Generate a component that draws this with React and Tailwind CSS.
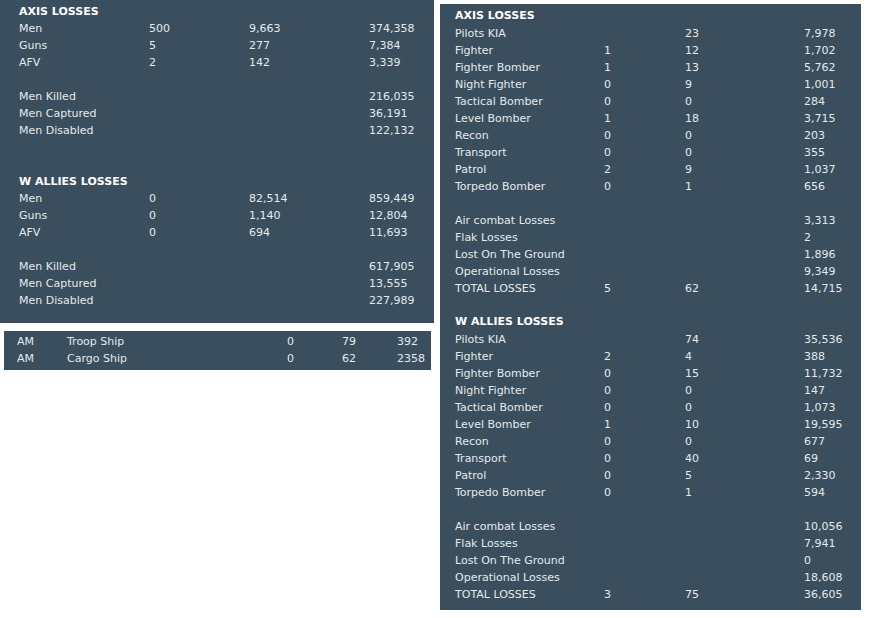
import React from 'react'

const leftAxis = [
  ['Men', '500', '9,663', '374,358'],
  ['Guns', '5', '277', '7,384'],
  ['AFV', '2', '142', '3,339'],
  null,
  ['Men Killed', '', '', '216,035'],
  ['Men Captured', '', '', '36,191'],
  ['Men Disabled', '', '', '122,132'],
]

const leftAllies = [
  ['Men', '0', '82,514', '859,449'],
  ['Guns', '0', '1,140', '12,804'],
  ['AFV', '0', '694', '11,693'],
  null,
  ['Men Killed', '', '', '617,905'],
  ['Men Captured', '', '', '13,555'],
  ['Men Disabled', '', '', '227,989'],
]

const airAxis = [
  ['Pilots KIA', '', '23', '7,978'],
  ['Fighter', '1', '12', '1,702'],
  ['Fighter Bomber', '1', '13', '5,762'],
  ['Night Fighter', '0', '9', '1,001'],
  ['Tactical Bomber', '0', '0', '284'],
  ['Level Bomber', '1', '18', '3,715'],
  ['Recon', '0', '0', '203'],
  ['Transport', '0', '0', '355'],
  ['Patrol', '2', '9', '1,037'],
  ['Torpedo Bomber', '0', '1', '656'],
  null,
  ['Air combat Losses', '', '', '3,313'],
  ['Flak Losses', '', '', '2'],
  ['Lost On The Ground', '', '', '1,896'],
  ['Operational Losses', '', '', '9,349'],
  ['TOTAL LOSSES', '5', '62', '14,715'],
]

const airAllies = [
  ['Pilots KIA', '', '74', '35,536'],
  ['Fighter', '2', '4', '388'],
  ['Fighter Bomber', '0', '15', '11,732'],
  ['Night Fighter', '0', '0', '147'],
  ['Tactical Bomber', '0', '0', '1,073'],
  ['Level Bomber', '1', '10', '19,595'],
  ['Recon', '0', '0', '677'],
  ['Transport', '0', '40', '69'],
  ['Patrol', '0', '5', '2,330'],
  ['Torpedo Bomber', '0', '1', '594'],
  null,
  ['Air combat Losses', '', '', '10,056'],
  ['Flak Losses', '', '', '7,941'],
  ['Lost On The Ground', '', '', '0'],
  ['Operational Losses', '', '', '18,608'],
  ['TOTAL LOSSES', '3', '75', '36,605'],
]

function Rows({ rows, cols }) {
  return rows.map((r, i) =>
    r ? (
      <div key={i} className={`grid ${cols} h-[17px] leading-[17px]`}>
        {r.map((c, j) => (
          <span key={j} className="whitespace-nowrap">{c}</span>
        ))}
      </div>
    ) : (
      <div key={i} className="h-[17px]" />
    )
  )
}

function Header({ children, tall }) {
  return (
    <div className={`${tall ? 'h-[18px] pb-px' : 'h-[17px]'} leading-[17px] font-bold text-white`}>
      {children}
    </div>
  )
}

export default function App() {
  const leftCols = 'grid-cols-[130px_100px_120px_1fr]'
  const rightCols = 'grid-cols-[149px_81px_119px_1fr]'
  return (
    <div className="w-[869px] h-[618px] bg-white flex items-start font-['Tahoma','DejaVu_Sans',sans-serif] text-[11px] text-[#e4e9ec]">
      <div className="flex flex-col">
        <div className="w-[434px] h-[323px] bg-[#3b4e5d] pl-[19px] pt-[3px]">
          <Header>AXIS LOSSES</Header>
          <Rows rows={leftAxis} cols={leftCols} />
          <div className="h-[34px]" />
          <Header>W ALLIES LOSSES</Header>
          <Rows rows={leftAllies} cols={leftCols} />
        </div>
        <div className="ml-[4px] mt-[8px] w-[427px] h-[39px] bg-[#3b4e5d] pl-[13px] pt-[2px]">
          <Rows
            rows={[
              ['AM', 'Troop Ship', '0', '79', '392'],
              ['AM', 'Cargo Ship', '0', '62', '2358'],
            ]}
            cols="grid-cols-[50px_220px_55px_55px_1fr]"
          />
        </div>
      </div>
      <div className="ml-[6px] mt-[4px] w-[421px] h-[606px] bg-[#3b4e5d] pl-[15px] pt-[3px]">
        <Header tall>AXIS LOSSES</Header>
        <Rows rows={airAxis} cols={rightCols} />
        <div className="h-[16px]" />
        <Header tall>W ALLIES LOSSES</Header>
        <Rows rows={airAllies} cols={rightCols} />
      </div>
    </div>
  )
}
